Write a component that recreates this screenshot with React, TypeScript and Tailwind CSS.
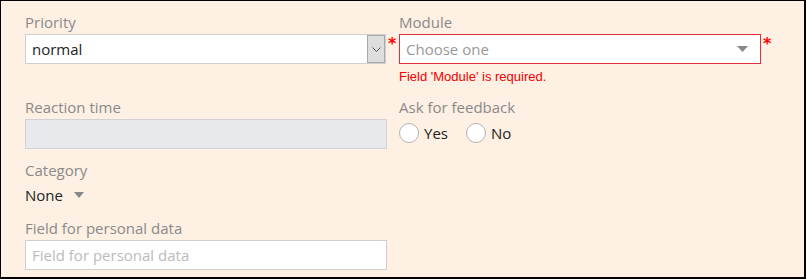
import { useState } from 'react';

const labelCls = 'block text-[15px] leading-[20px] text-[#8a8a8a] mb-[2px]';

function Asterisk() {
  return (
    <span className="w-[13px] shrink-0 pl-[2px] text-[16px] leading-[16px] font-bold text-[#ff0000] pt-[2px] font-['DejaVu_Sans',sans-serif]">
      *
    </span>
  );
}

function Radio({ label }: { label: string }) {
  return (
    <label className="flex items-center gap-[5px] text-[15px] text-[#222]">
      <span className="w-[20px] h-[20px] rounded-full border border-[#b3b3b3] bg-white" />
      {label}
    </label>
  );
}

export default function App() {
  const [personal, setPersonal] = useState('');

  return (
    <div className="w-[806px] h-[279px] bg-[#fef0e3] border-t border-l border-r-2 border-b-2 border-black font-['Open_Sans',sans-serif]">
      <div className="grid grid-cols-[374px_375px] pl-[24px] pt-[11px]">
        {/* Priority */}
        <div>
          <span className={labelCls}>Priority</span>
          <div className="flex">
            <div className="flex w-[362px] h-[30px] bg-white border border-[#cfcfcf]">
              <span className="flex-1 pl-[6px] text-[15px] leading-[28px] text-[#222]">normal</span>
              <span className="w-[18px] h-[28px] flex items-center justify-center bg-[#dedede] border border-[#a9a9a9]">
                <svg width="9" height="5" viewBox="0 0 9 5" fill="none">
                  <path d="M0.5 0.5 L4.5 4.5 L8.5 0.5" stroke="#555" strokeWidth="1" />
                </svg>
              </span>
            </div>
            <Asterisk />
          </div>
        </div>

        {/* Module */}
        <div>
          <span className={labelCls}>Module</span>
          <div className="flex">
            <div className="flex items-center w-[363px] h-[30px] bg-white border border-[#e0303f]">
              <span className="flex-1 pl-[6px] text-[15px] leading-[28px] text-[#999]">Choose one</span>
              <svg className="mr-[12px]" width="11" height="6" viewBox="0 0 11 6">
                <path d="M0 0 L11 0 L5.5 6 Z" fill="#888" />
              </svg>
            </div>
            <Asterisk />
          </div>
          <p className="mt-[5px] text-[13px] leading-[16px] text-[#ee0000] font-['Liberation_Sans',sans-serif]">
            Field 'Module' is required.
          </p>
        </div>

        {/* Reaction time */}
        <div className="mt-[12px]">
          <span className={labelCls}>Reaction time</span>
          <div className="w-[362px] h-[30px] bg-[#e7e9ec] border border-[#cfd2d6]" />
        </div>

        {/* Ask for feedback */}
        <div className="mt-[12px]">
          <span className={labelCls}>Ask for feedback</span>
          <div className="flex gap-[18px] pt-[3px]">
            <Radio label="Yes" />
            <Radio label="No" />
          </div>
        </div>

        {/* Category */}
        <div className="col-span-2 mt-[11px]">
          <span className={labelCls}>Category</span>
          <div className="flex items-center gap-[11px] pt-[3px] text-[15px] leading-[20px] text-[#222]">
            None
            <svg width="10" height="6" viewBox="0 0 10 6">
              <path d="M0 0 L10 0 L5 6 Z" fill="#888" />
            </svg>
          </div>
        </div>

        {/* Field for personal data */}
        <div className="col-span-2 mt-[13px]">
          <span className={labelCls}>Field for personal data</span>
          <input
            value={personal}
            onChange={(e) => setPersonal(e.target.value)}
            placeholder="Field for personal data"
            className="w-[362px] h-[30px] bg-white border border-[#cfcfcf] px-[6px] text-[15px] text-[#222] placeholder:text-[#bbb] outline-none"
          />
        </div>
      </div>
    </div>
  );
}
